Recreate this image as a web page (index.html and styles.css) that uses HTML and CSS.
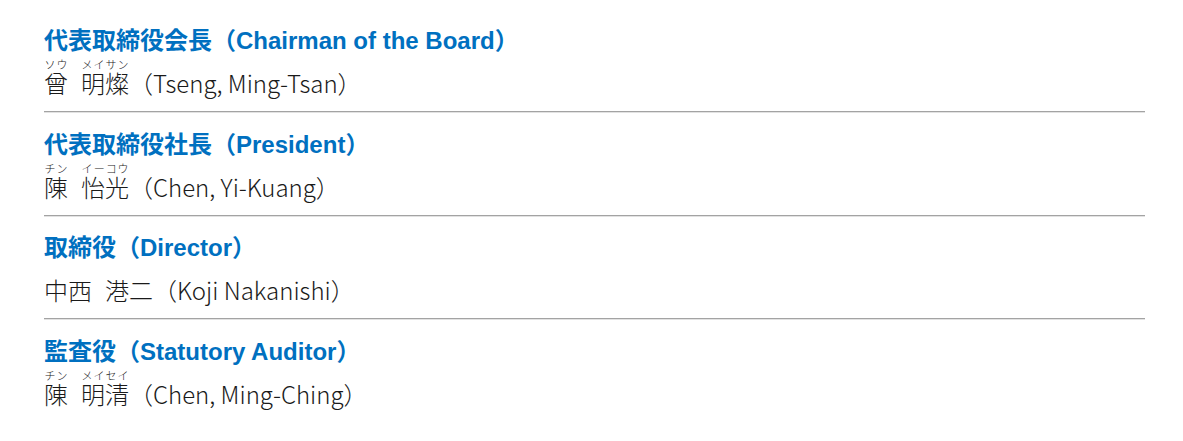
FILE: index.html
```html
<!DOCTYPE html>
<html lang="ja">
<head>
<meta charset="utf-8">
<link rel="stylesheet" href="styles.css">
</head>
<body>
<div class="officers">
  <section class="officer">
    <h2 class="role">代表取締役会長（<span class="en">Chairman of the Board</span>）</h2>
    <p class="name"><ruby class="family">曾<rt>ソウ</rt></ruby><ruby>明燦<rt>メイサン</rt></ruby>（Tseng, Ming-Tsan）</p>
  </section>
  <section class="officer">
    <h2 class="role">代表取締役社長（<span class="en">President</span>）</h2>
    <p class="name"><ruby class="family">陳<rt>チン</rt></ruby><ruby>怡光<rt>イーコウ</rt></ruby>（Chen, Yi-Kuang）</p>
  </section>
  <section class="officer">
    <h2 class="role">取締役（<span class="en">Director</span>）</h2>
    <p class="name"><span class="family">中西</span>港二（Koji Nakanishi）</p>
  </section>
  <section class="officer last">
    <h2 class="role">監査役（<span class="en">Statutory Auditor</span>）</h2>
    <p class="name"><ruby class="family">陳<rt>チン</rt></ruby><ruby>明清<rt>メイセイ</rt></ruby>（Chen, Ming-Ching）</p>
  </section>
</div>
</body>
</html>
```
FILE: styles.css
```css
html, body {
  margin: 0;
  padding: 0;
  background: #ffffff;
}

.officers {
  padding: 8.5px 38px 0 44px;
  font-family: "Noto Sans CJK JP", sans-serif;
}

.officer {
  padding: 14.5px 0 3px;
  border-bottom: 1px solid #a3a3a3;
  box-shadow: 0 1px 0 #e2e2e2;
}

.officer.last {
  border-bottom: none;
  box-shadow: none;
}

.role {
  margin: 0;
  font-size: 24px;
  line-height: 32px;
  font-weight: 700;
  color: #0070c0;
  font-family: "Noto Sans CJK JP", sans-serif;
}

.role .en {
  font-family: "Liberation Sans", Arial, sans-serif;
  line-height: 1;
}

.name {
  margin: 3px 0 0;
  font-size: 24px;
  line-height: 50px;
  font-weight: 300;
  color: #1a1a1a;
  font-family: "Noto Sans CJK JP", sans-serif;
}

.name .family {
  margin-right: 13px;
}

.name ruby rt {
  font-size: 11px;
  line-height: 2px;
  color: #1a1a1a;
}
```
